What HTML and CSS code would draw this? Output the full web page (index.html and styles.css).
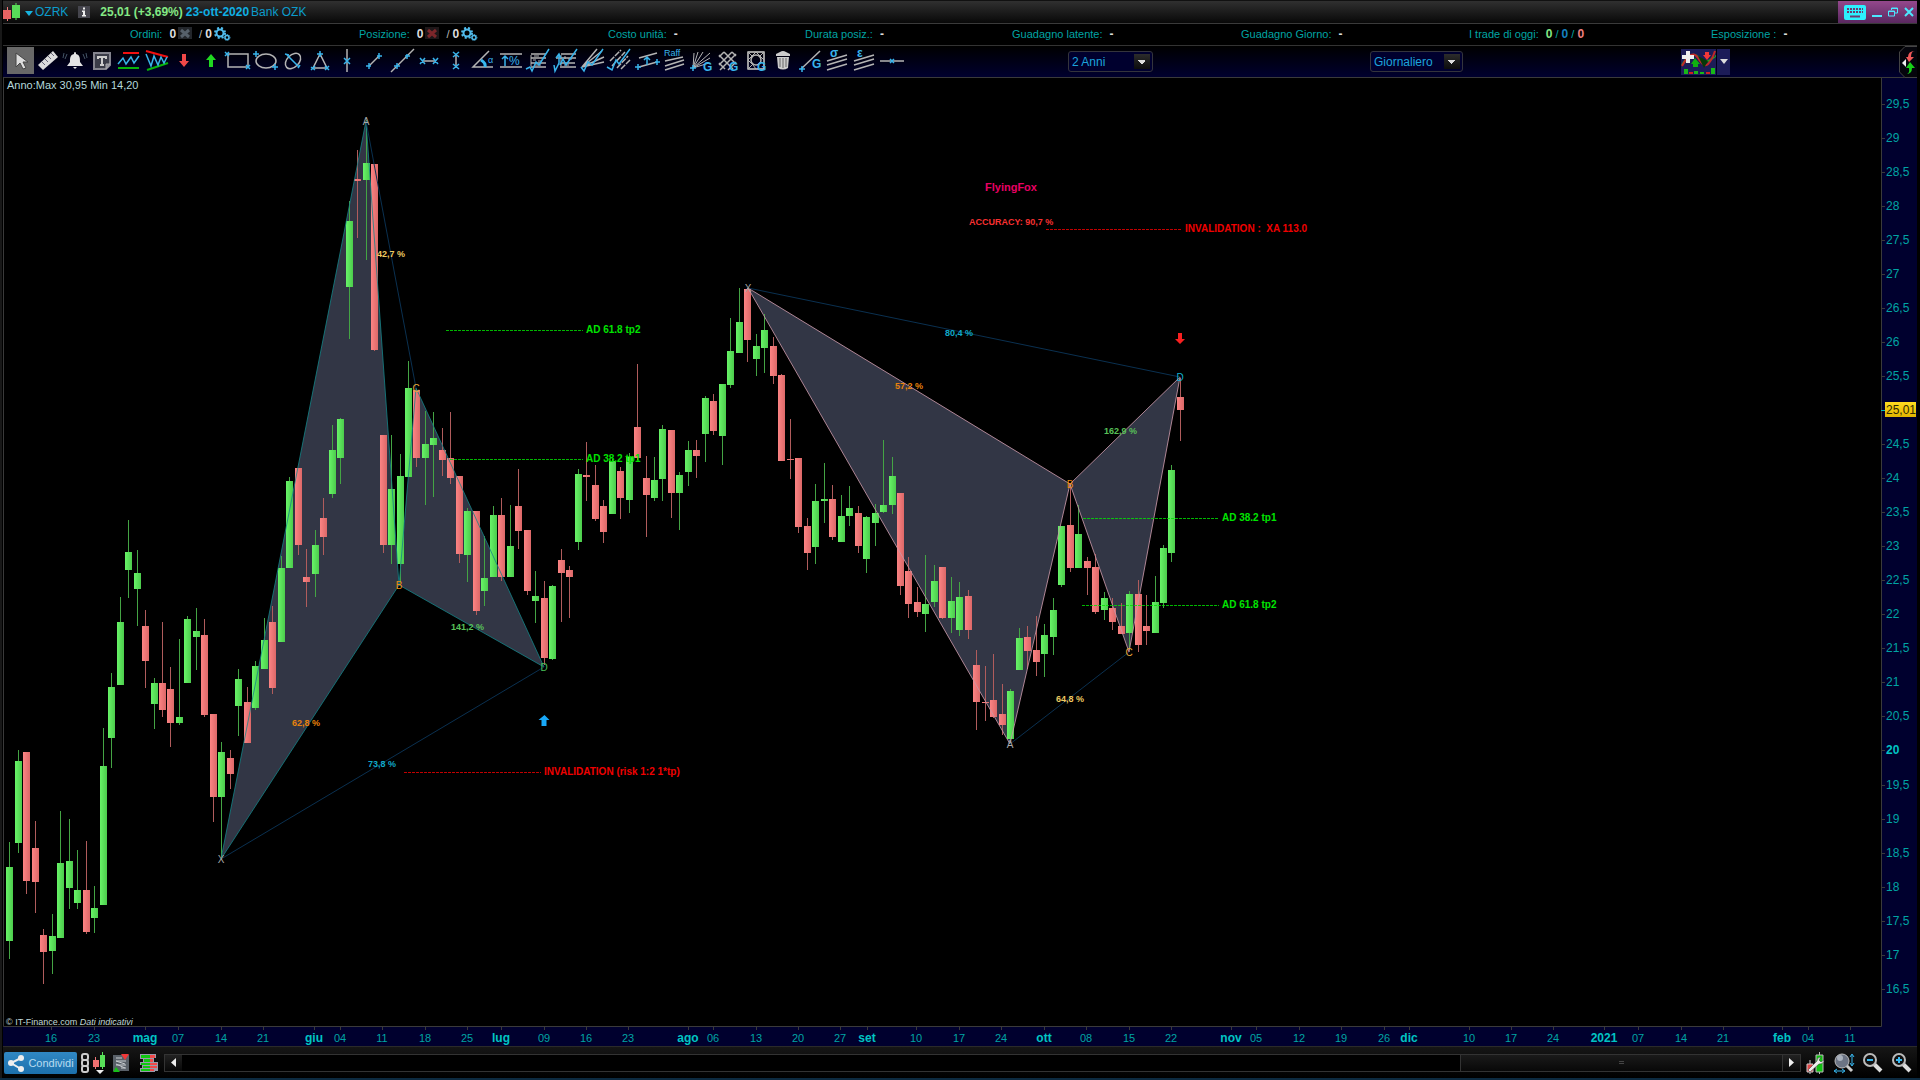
FILE: index.html
```
<!DOCTYPE html>
<html lang="it">
<head>
    <meta charset="UTF-8">
    <meta name="viewport" content="width=device-width" />
    <title>OZRK - Bank OZK</title>
<link rel="stylesheet" href="styles.css">
</head>

<body>
<header class="title">
  <svg class="logo" width="18" height="18" viewBox="0 0 18 18">
    <path d="M4.500 4v14" stroke="#f07878"/><rect x="0" y="7" width="8" height="9" fill="#e86464"/>
    <path d="M13 0v17" stroke="#5ce65c"/><rect x="9" y="2" width="8" height="13" fill="#58dc58"/>
  </svg>
  <svg class="caret" width="8" height="5" viewBox="0 0 8 5"><path d="M0 0h8L4 5z" fill="#18b4e0"/></svg>
  <span class="ticker">OZRK</span>
  <svg class="about" width="12" height="12" viewBox="0 0 12 12"><rect width="12" height="12" fill="#45454d"/><path d="M5 1.500h2v2H5zM4 4.500h3v4.500h1v1.500H4V9h1V6H4z" fill="#eee"/></svg>
  <b class="price">25,01 (+3,69%)</b>
  <b class="date">23-ott-2020</b>
  <span class="name">Bank OZK</span>
  <div class="winbar">
    <button aria-label="Tastiera"><svg width="22" height="16" viewBox="0 0 22 16"><rect y="1" width="22" height="15" rx="2" fill="#2cf0ff"/><path d="M3 5h16M3 8h16" stroke="#6a3a70" stroke-width="2" stroke-dasharray="2 1"/><path d="M6 12.500h10" stroke="#6a3a70" stroke-width="2"/></svg></button>
    <button aria-label="Riduci"><svg width="10" height="16" viewBox="0 0 10 16"><path d="M0 12h10" stroke="#4ce8ff" stroke-width="2"/></svg></button>
    <button aria-label="Ripristina"><svg width="10" height="16" viewBox="0 0 10 16"><path d="M3.500 6V4h6v5H7M.5 7h6v5h-6zM3 4.500h7M0 7.500h7" fill="none" stroke="#4ce8ff"/></svg></button>
    <button aria-label="Chiudi"><svg width="10" height="16" viewBox="0 0 10 16"><path d="M1 4l8 8M9 4l-8 8" stroke="#4ce8ff" stroke-width="2"/></svg></button>
  </div>
</header>

<div class="info">
  <div>Ordini: <b>0</b>
    <button aria-label="Annulla ordini"><svg width="14" height="13" viewBox="0 0 14 13"><rect width="14" height="12" fill="#23262b"/><path d="M3 3l8 7M11 3l-8 7" stroke="#56606a" stroke-width="3"/></svg></button>
    <i>/</i><b>0</b><button aria-label="Impostazioni ordini"><svg width="16" height="14" viewBox="0 0 16 14"><use href="#gears"/></svg></button></div>
  <div>Posizione: <b>0</b>
    <button aria-label="Chiudi posizione"><svg width="14" height="13" viewBox="0 0 14 13"><rect width="14" height="12" fill="#1e1719"/><path d="M3 3l8 7M11 3l-8 7" stroke="#7c262a" stroke-width="3"/></svg></button>
    <i>/</i><b>0</b><button aria-label="Impostazioni posizione"><svg width="16" height="14" viewBox="0 0 16 14"><use href="#gears"/></svg></button></div>
  <div>Costo unità: <b>-</b></div>
  <div>Durata posiz.: <b>-</b></div>
  <div>Guadagno latente: <b>-</b></div>
  <div>Guadagno Giorno: <b>-</b></div>
  <div>I trade di oggi: <span><b class="up">0</b> / <b class="flat">0</b> / <b class="down">0</b></span></div>
  <div>Esposizione : <b>-</b></div>
</div>

<div class="toolbar">
  <div class="tools">
    <button class="on" aria-label="Puntatore"><svg viewBox="0 0 24 24"><path d="M7 4v14l4-4 3 6 3-1-3-6h5z" fill="#ddd" stroke="#444"/></svg></button>
    <button aria-label="Righello"><svg viewBox="0 0 24 24"><path d="M2 16L17 2l5 6L7 21z" fill="#ddd"/><path d="M6 13l3 3M9 10l3 3M12 7l3 3M15 4l3 3" stroke="#667"/></svg></button>
    <button aria-label="Allarme"><svg viewBox="0 0 24 24"><path d="M12 3c-1 0-1 1-1 2-4 1-4 4-4 8l-3 4h16l-3-4c0-4 0-7-4-8 0-1 0-2-1-2zM10 18h4l-2 2z" fill="#e4e4e4"/><path d="M4 5L2 10M1 4L0 9M20 5l2 5M23 4l1 5" stroke="#456" fill="none"/></svg></button>
    <button aria-label="Testo"><svg viewBox="0 0 24 24"><path d="M4 4h16v12l-4 4H4z" fill="#3a3c48" stroke="#84848e" stroke-width="2"/><path d="M20 15h-4v5z" fill="#889" stroke="#aaa"/><path d="M8 10V8h8v2M12 8v8M10 16h4" fill="none" stroke="#ccc" stroke-width="2"/></svg></button>
    <button aria-label="Supporto resistenza"><svg viewBox="0 0 24 24"><path d="M6 4h16" stroke="#f21010" stroke-width="2"/><path d="M1 19h21" stroke="#08b408" stroke-width="2"/><path d="M1 15l5-6 3 6 5-7 3 6 5-7" fill="none" stroke="#3ab4e8" stroke-width="1.500"/></svg></button>
    <button aria-label="Triangoli"><svg viewBox="0 0 24 24"><path d="M1 2l22 6" stroke="#f21010" stroke-width="2"/><path d="M2 21l21-7" stroke="#08b408" stroke-width="2"/><path d="M1 5l5 12 3-10 4 9 3-8 3 6 3-6" fill="none" stroke="#3ab4e8" stroke-width="1.500"/></svg></button>
    <button aria-label="Freccia giù"><svg viewBox="0 0 24 24"><path d="M10 5h4v7h3l-5 6-5-6h3z" fill="#f04848"/></svg></button>
    <button aria-label="Freccia su"><svg viewBox="0 0 24 24"><path d="M10 18h4v-7h3l-5-6-5 6h3z" fill="#20d820"/></svg></button>
    <button aria-label="Rettangolo"><svg viewBox="0 0 24 24"><path d="M2 5h20v13H2z" class="w"/><path d="M-1 3l4 4m0-4l-4 4M20 16l4 4m0-4l-4 4" class="b"/></svg></button>
    <button aria-label="Ellisse"><svg viewBox="0 0 24 24"><ellipse cx="12" cy="12" rx="10" ry="7" class="w"/><path d="M2 2v6M-1 5h6M21 15v6M18 18h6" class="b"/></svg></button>
    <button aria-label="Ellisse inclinata"><svg viewBox="0 0 24 24"><ellipse cx="12" cy="12" rx="9" ry="6" transform="rotate(-45 12 12)" class="w"/><path d="M6 6l12 12M4 5l4 1M17 19l2-3" class="b"/></svg></button>
    <button aria-label="Triangolo"><svg viewBox="0 0 24 24"><path d="M12 5L5 19h14z" class="w"/><path d="M12 2v6M9 5h6M3 18l4 3m0-4l-4 4M17 17l4 4m0-4l-4 4" class="b"/></svg></button>
    <button aria-label="Linea verticale"><svg viewBox="0 0 24 24"><path d="M12 0v23" class="w"/><path d="M9 9l6 6M15 9l-6 6" class="b"/></svg></button>
    <button aria-label="Segmento"><svg viewBox="0 0 24 24"><path d="M7 17L17 7" class="w"/><path d="M7 14v6M4 17h5M17 4v6M15 7h5" class="b"/></svg></button>
    <button aria-label="Retta"><svg viewBox="0 0 24 24"><path d="M1 23L24 0" class="w"/><path d="M7 14v6M4 17h6M17 5v5M15 7h5" class="b"/></svg></button>
    <button aria-label="Segmento orizzontale"><svg viewBox="0 0 24 24"><path d="M5 12h14" class="w"/><path d="M3 9l5 6m0-6l-5 6M16 9l5 6m0-6l-5 6" class="b"/></svg></button>
    <button aria-label="Segmento verticale"><svg viewBox="0 0 24 24"><path d="M12 5v14" class="w"/><path d="M9 3l6 5m0-5l-6 5M9 15l6 5m0-5l-6 5" class="b"/></svg></button>
    <button aria-label="Angolo"><svg viewBox="0 0 24 24"><path d="M18 2L2 18h20" class="w"/><path d="M10 11q5 3 4 7" stroke="#38b8f0" stroke-width="3" fill="none"/><text x="17" y="14">α</text></svg></button>
    <button aria-label="Variazione"><svg viewBox="0 0 24 24"><path d="M1 5h22M1 18h22" class="w"/><path d="M6 17V8M3 10l3-3 3 3" class="b"/><text x="10" y="16" class="big">%</text></svg></button>
    <button aria-label="Fibonacci ritracciamenti"><svg viewBox="0 0 24 24"><path d="M5 5h15M5 9h15M5 14h15M5 18h15" class="w"/><path d="M5 6v11M8 7h5M12 12h4M7 11h3M9 16h6" class="w thin"/><path d="M0 20l4-2 2 4 4-9 3 3L23 0" class="b"/></svg></button>
    <button aria-label="Fibonacci estensioni"><svg viewBox="0 0 24 24"><path d="M8 5h15M3 9h20M8 14h14M7 18h16" class="w"/><path d="M8 6v11M12 7v3M15 10h4M11 16h5" class="w thin"/><path d="M1 16l1 6 4-8V6M3 9l3-4 2 4M7 16l3-6 3 6L24 0" class="b"/></svg></button>
    <button aria-label="Ventaglio Fibonacci"><svg viewBox="0 0 24 24"><path d="M2 18L17 0M2 18L22 2M2 18L24 8M2 18L24 13" class="w"/><path d="M1 18l3 4 4-9 4 3L23 0" class="b"/></svg></button>
    <button aria-label="Fibonacci temporale"><svg viewBox="0 0 24 24"><path d="M3 12L14 1M5 17L18 3M10 19L21 7M14 20l9-9" class="w" stroke-dasharray="6 1"/><path d="M0 18l5 3 4-10 3 4L23 0" class="b"/></svg></button>
    <button aria-label="Canale"><svg viewBox="0 0 24 24"><path d="M4 9l18-5M4 18l18-5" class="w"/><path d="M12 16V9M9 11l3-3 3 3M3 15v6M0 18h6M22 10v6M20 13h5" class="b"/></svg></button>
    <button aria-label="Raff"><svg viewBox="0 0 24 24"><path d="M3 12l18-4M3 17l19-6M3 21l19-6" class="w"/><text x="2" y="7">Raff</text></svg></button>
    <button aria-label="Ventaglio Gann"><svg viewBox="0 0 24 24"><path d="M4 19L5 4M4 19L9 3M4 19L14 3M4 19L21 4M4 19L21 9M4 19l16-5" class="w thin"/><path d="M4 16v6M1 19h6" class="b"/><text x="14" y="22" class="g">G</text></svg></button>
    <button aria-label="Griglia Gann"><svg viewBox="0 0 24 24"><path d="M3 8l5-5M3 16L16 3M4 21L20 5M12 21l8-8M16 3l4 4M8 3l12 12M3 6l14 14M3 14l6 6" class="w"/><text x="13" y="22" class="g">G</text></svg></button>
    <button aria-label="Quadrato Gann"><svg viewBox="0 0 24 24"><path d="M4 3h16v17H4zM4 3l4 4M20 3l-4 4M4 20l4-4M12 3l-3 3-5 5 5 5 3 4M12 3l3 3 5 5" class="w thin"/><path d="M4 3h16v17H4z" class="w"/><circle cx="12" cy="11" r="5" class="w"/><text x="13" y="22" class="g">G</text></svg></button>
    <button aria-label="Elimina"><svg viewBox="0 0 24 24"><path d="M5 7h14v-2l-4-2q-3-2-6 0L5 5zM6 8h12l-1 11q-5 3-10 0z" fill="#ccc"/><path d="M9 9v9M12 9v10M15 9v9" stroke="#666"/></svg></button>
    <button aria-label="Linea Gann"><svg viewBox="0 0 24 24"><path d="M3 20L22 2" class="w"/><path d="M4 17v6M1 20h6" class="b"/><text x="14" y="19" class="g">G</text></svg></button>
    <button aria-label="Deviazione"><svg viewBox="0 0 24 24"><path d="M2 12l20-6M2 16l20-6M2 21l20-6" class="w"/><text x="5" y="8" class="g">σ</text></svg></button>
    <button aria-label="Errore standard"><svg viewBox="0 0 24 24"><path d="M2 12l20-6M2 16l20-6M2 21l20-6" class="w"/><text x="5" y="8" class="g">ε</text></svg></button>
    <button aria-label="Linea orizzontale"><svg viewBox="0 0 24 24"><path d="M0 12h24" class="w"/><path d="M10 10l4 4M14 10l-4 4" class="b"/></svg></button>
  </div>
  <select class="range" aria-label="Periodo"><option>2 Anni</option></select>
  <select class="frame" aria-label="Intervallo"><option>Giornaliero</option></select>
  <div class="indicators">
    <button aria-label="Indicatori"><svg width="35" height="28" viewBox="0 0 35 28">
      <path d="M1 17Q11 2 17 9T29 12T34 8" fill="none" stroke="#20a020" stroke-width="2"/><path d="M1 18Q11 0 17 10T27 16T34 3" fill="none" stroke="#c02828" stroke-width="2"/>
      <path d="M17 8l6 12 4-7z" fill="#063808"/><path d="M24 4h4v3h2l-4 5-4-5h2z" fill="#f03838"/><path d="M12 19h5v-3h2l-5-6-4 6h2z" fill="#10b010"/>
      <path d="M5 3h4v4h4v4H9v4H5v-4H1V7h4z" fill="#eee"/><path d="M3 21h4v5H3zM13 23h4v3h-4zM19 24h4v2h-4zM30 20h4v6h-4z" fill="#18b818"/><path d="M8 24h4v2H8zM25 24h4v2h-4z" fill="#d02020"/></svg></button>
    <button class="more" aria-label="Altri indicatori"><svg width="8" height="5" viewBox="0 0 8 5"><path d="M0 0h8L4 5z" fill="#ddd"/></svg></button>
  </div>
  <button class="side" aria-label="Pannello ordini"><svg width="18" height="32" viewBox="0 0 18 32"><path d="M18 .5H6L.5 6v20l5.500 5.500h12" fill="#05050c" stroke="#444"/><path d="M3 17l4-4v8z" fill="#eee"/><path d="M16 5q-4 0-4 6h3l-5 5-3-5h2q0-6 7-6z" fill="#f05858"/><path d="M7 28q4 0 3-6H7l4-6 5 6h-3q0 6-6 6z" fill="#18d018"/></svg></button>
</div>

<main class="chart">
  <svg id="plot" viewBox="3 78 1914 968" preserveAspectRatio="xMinYMin meet" role="img" aria-label="Grafico OZRK giornaliero">
    <defs>
      <linearGradient id="bull"><stop offset="0" stop-color="#68f468"/><stop offset="1" stop-color="#4ccc4c"/></linearGradient>
      <linearGradient id="bear"><stop offset="0" stop-color="#fc8484"/><stop offset="1" stop-color="#dc6868"/></linearGradient>
      <linearGradient id="gold" x2="0" y2="1"><stop offset="0" stop-color="#ffdc20"/><stop offset="1" stop-color="#e0b400"/></linearGradient>
      <g id="gears" fill="none" stroke="#50bcec"><circle cx="6" cy="6" r="3.500" stroke-width="2"/><circle cx="6" cy="6" r="5" stroke-width="2" stroke-dasharray="2 2"/><circle cx="13" cy="10.500" r="2" stroke-width="1.500"/><circle cx="13" cy="10.500" r="3" stroke-dasharray="1 1"/></g>
    </defs>
    <rect class="axis" x="1881" y="78" width="36" height="968"/>
    <rect class="axis" x="3" y="1026" width="1914" height="20"/>
    <path class="frameline" d="M3.500 78V1026.500H1881.500V78"/>
    <g id="fills"></g>
    <g id="bars"></g>
    <g id="lines"></g>
    <g id="labels"></g>
    <g id="scales"></g>
    <text class="stats" x="7" y="89">Anno:Max 30,95 Min 14,20</text>
    <text class="source" x="6" y="1025">© IT-Finance.com <tspan font-style="italic">Dati indicativi</tspan></text>
    <path d="M544.500 715l5 5h-3v6h-5v-6h-3z" fill="#18a8f8"/>
    <path d="M1180 344l-5-5h3v-6h4v6h3z" fill="#f82020"/>
  </svg>
</main>

<footer class="bottom">
  <button class="share"><svg width="18" height="18" viewBox="0 0 18 18"><path d="M14 4L4 9l10 6" fill="none" stroke="#eee" stroke-width="2"/><circle cx="14" cy="4" r="3" fill="#eee"/><circle cx="4" cy="9" r="3" fill="#eee"/><circle cx="14" cy="15" r="3" fill="#eee"/></svg>Condividi</button>
  <button aria-label="Collega grafici"><svg width="26" height="22" viewBox="0 0 26 22"><g fill="none" stroke="#ccc" stroke-width="2"><rect x="1" y="2" width="6" height="6" rx="2"/><rect x="1" y="8" width="6" height="6" rx="2"/><rect x="1" y="14" width="6" height="6" rx="2"/></g><path d="M14.500 5v12" stroke="#f07878"/><path d="M12 8h6v7h-6z" fill="#f07070"/><path d="M21.500 0v17" stroke="#5ce65c"/><path d="M19 3h5v12h-5z" fill="#58e058"/><path d="M15 18h8l-4 4z" fill="#eee"/></svg></button>
  <button class="sheet" aria-label="Lista titoli"><svg width="16" height="18" viewBox="0 0 16 18"><path d="M0 1h16v16H0z" fill="#596068"/><path d="M3 4h6M3 7l9 3M3 10l9 4M8 14h5M3 7h10M3 11h10" stroke="#c8ccd0"/><path d="M8 0h8l-4 6z" fill="#f03838"/><path d="M0 18l3-5 4 5z" fill="#18c018"/></svg></button>
  <button class="book" aria-label="Book"><svg width="18" height="18" viewBox="0 0 18 18"><path d="M0 0h16v4h-2v4h4v9h-3v1H0v-4h2v-3H0V8h3V5H0z" fill="#99a"/><path d="M1 1h9v3H1zM4 5h6v3H4zM1 9h9v2H1zM3 12h7v2H3zM1 15h9v2H1z" fill="#10c810"/><path d="M10 1h5v3h-5zM10 5h3v3h-3zM10 9h7v2h-7zM10 12h7v2h-7zM10 15h4v2h-4z" fill="#f04848"/></svg></button>
  <div class="scroll">
    <button aria-label="Indietro"><svg width="5" height="9" viewBox="0 0 5 9"><path d="M5 0v9L0 4.500z" fill="#eee"/></svg></button>
    <input type="range" min="0" max="100" value="100" aria-label="Scorrimento">
    <button aria-label="Avanti"><svg width="5" height="9" viewBox="0 0 5 9"><path d="M0 0v9l5-4.500z" fill="#eee"/></svg></button>
  </div>
  <div class="zoom">
    <button aria-label="Impostazioni grafico"><svg width="20" height="22" viewBox="0 0 20 22"><path d="M5 8v14" stroke="#ccc"/><path d="M2 12h6v8H2z" fill="#e04848" stroke="#ccc"/><path d="M14.500 0v22" stroke="#bbb"/><path d="M11 3h7v17h-7z" fill="#10c010" stroke="#bbb"/><path d="M3 18L12 9q0-4 4-4l-2 3 2 2 3-2q0 4-5 4l-9 8z" fill="#eee" stroke="#333" stroke-width=".5"/></svg></button>
    <button aria-label="Adatta"><svg width="20" height="20" viewBox="0 0 20 20"><path d="M12 12l6 6" stroke="#ccc" stroke-width="3"/><circle cx="8" cy="8" r="7" fill="#6c7484" stroke="#bbb"/><circle cx="6" cy="5" r="3" fill="#a8b0bc"/><path d="M18 2v10M16 4l2-3 2 3M16 10l2 3 2-3M1 18h9M3 16l-3 2 3 2M8 16l3 2-3 2" fill="none" stroke="#38b8f0"/></svg></button>
    <button aria-label="Riduci zoom"><svg width="20" height="20" viewBox="0 0 20 20"><path d="M11 11l7 7" stroke="#ddd" stroke-width="4"/><circle cx="7" cy="7" r="6" fill="#111" stroke="#bbb" stroke-width="2"/><path d="M4 7h6" stroke="#38b8f0" stroke-width="2"/></svg></button>
    <button aria-label="Aumenta zoom"><svg width="20" height="20" viewBox="0 0 20 20"><path d="M11 11l7 7" stroke="#ddd" stroke-width="4"/><circle cx="7" cy="7" r="6" fill="#111" stroke="#bbb" stroke-width="2"/><path d="M4 7h6M7 4v6" stroke="#38b8f0" stroke-width="2"/></svg></button>
  </div>
</footer>

<script src="chart.js"></script>
</body>
</html>
```

FILE: styles.css
```
* {
  box-sizing: border-box;
}
body {
  margin: 0;
  padding: 0 3px;
  height: 100vh;
  display: flex;
  flex-direction: column;
  background: #000;
  border-bottom: 2px solid #0c2a40;
  box-shadow: inset 2px 0 #181818;
  font: 12px/16px "Liberation Sans", Arial, sans-serif;
  color: #00a4a4;
  overflow: hidden;
}
button {
  display: flex;
  align-items: center;
  justify-content: center;
  border: 0;
  padding: 0;
  background: none;
  font: inherit;
  color: inherit;
}
svg {
  display: block;
  overflow: visible;
}

/* title bar */
.title {
  flex: none;
  display: flex;
  align-items: center;
  height: 24px;
  border-top: 1px solid #111;
  border-bottom: 1px solid #3a3a3a;
  background: linear-gradient(#303030, #080808);
  color: #0c9ccc;
}
.caret {
  margin: 2px 2px 0 4px;
}
.about {
  margin: 0 10px;
}
.price {
  color: #84e884;
}
.date {
  margin: 0 2px 0 3px;
  color: #10b0e4;
}
.winbar {
  display: flex;
  align-items: center;
  gap: 6px;
  height: 22px;
  margin-left: auto;
  padding: 0 3px 0 6px;
  background: linear-gradient(#94488c, #5a2860);
}

/* account figures */
.info {
  flex: none;
  display: grid;
  grid-template-columns: 229fr 249fr 197fr 207fr 229fr 228fr 242fr 206fr;
  align-items: center;
  height: 22px;
  padding: 0 0 2px 127px;
  border-bottom: 1px solid #333;
  font-size: 11px;
}
.info div {
  display: flex;
  align-items: center;
  gap: 7px;
  white-space: nowrap;
}
.info b {
  color: #ddd;
  font-size: 12px;
}
.info i {
  margin-right: -4px;
  font-style: normal;
  color: #bbb;
}
.info b + button {
  margin-left: -5px;
}
.info .up { color: #84e884; }
.info .flat { color: #1480c0; }
.info .down { color: #f08080; }

/* drawing tools */
.toolbar {
  flex: none;
  display: flex;
  align-items: center;
  height: 32px;
  padding-left: 4px;
  border-bottom: 1px solid #3a3a3a;
  background: linear-gradient(#000, #00002e);
}
.tools {
  display: flex;
  width: 898px;
  padding-bottom: 2px;
}
.tools button {
  flex: 1;
  height: 27px;
}
.tools .on {
  background: #686868;
}
.tools svg {
  width: 24px;
  height: 24px;
}
.w, .b {
  fill: none;
  stroke: #b4b4b4;
  stroke-width: 1.5;
}
.b {
  stroke: #38b4ec;
}
.thin {
  stroke-width: 1;
}
.tools text {
  font-size: 9px;
  fill: #38b4ec;
}
.tools .big {
  font-size: 12px;
}
.tools .g {
  font-size: 12px;
  font-weight: bold;
}
select {
  appearance: none;
  height: 21px;
  padding: 0 3px;
  border: 1px solid #34343c;
  border-radius: 3px;
  background:
    linear-gradient(45deg, #0000 50%, #ddd 0) right 10px top 8px / 4px 4px no-repeat,
    linear-gradient(-45deg, #0000 50%, #ddd 0) right 6px top 8px / 4px 4px no-repeat,
    linear-gradient(#2c2c2c, #0c0c0c) right 2px top 2px / 16px 15px no-repeat,
    #00002e;
  color: #1ca4dc;
  font: inherit;
}
.range {
  width: 85px;
  margin-left: 163px;
}
.frame {
  width: 93px;
  margin-left: 217px;
}
.indicators {
  display: flex;
  gap: 1px;
  margin: 0 auto 0 218px;
}
.indicators button {
  height: 26px;
  background: #1c1c58;
}
.indicators .more {
  width: 13px;
}

/* chart */
.chart {
  flex: 1;
  min-height: 0;
}
.chart svg {
  width: 100%;
  height: 100%;
}
.axis {
  fill: #00002e;
}
.frameline, .tick {
  fill: none;
  stroke: #3a3a3a;
}
.area {
  fill: #323645;
}
.link {
  stroke: #0a3050;
}
.first {
  fill: none;
  stroke: #148488;
  stroke-opacity: .8;
}
.second {
  fill: none;
  stroke: #c898a8;
  stroke-opacity: .85;
}
.bull { fill: url(#bull); }
.bear { fill: url(#bear); }
.wickup { fill: #44a444; }
.wickdown { fill: #b05c5c; }
.chart text {
  font-size: 11px;
  fill: #00a4a4;
}
.chart .month {
  font-size: 12px;
  font-weight: bold;
  fill: #00c4c4;
}
.chart .value {
  font-size: 12px;
}
.chart .tag {
  font-size: 12px;
  fill: #302800;
}
.chart .stats {
  fill: #b4d8dc;
}
.chart .source {
  font-size: 9px;
  fill: #c0d8d8;
}
.chart .level {
  font-size: 10px;
  font-weight: bold;
}
.chart .ratio {
  font-size: 9px;
  font-weight: bold;
}
.chart .vertex {
  font-size: 10px;
}
.chart .pattern {
  font-size: 11px;
  font-weight: bold;
}

/* bottom bar */
.bottom {
  flex: none;
  display: flex;
  align-items: center;
  height: 32px;
  padding-left: 1px;
  border-top: 1px solid #2a2a2a;
  background: linear-gradient(#161616, #000);
}
.share {
  gap: 3px;
  width: 73px;
  height: 22px;
  margin-right: 4px;
  border-radius: 2px;
  background: linear-gradient(#3088c4, #1c70ac);
  color: #b8dcf0;
  font-size: 11px;
}
.sheet {
  margin: 0 11px 0 6px;
}
.book {
  margin-right: 6px;
}
.scroll {
  flex: 1;
  display: flex;
  height: 18px;
  border: 1px solid #333;
}
.scroll button {
  width: 17px;
  background: linear-gradient(#222, #080808);
}
.scroll input {
  flex: 1;
  min-width: 0;
  margin: 0;
  appearance: none;
  background: #000;
}
.scroll input::-webkit-slider-thumb {
  appearance: none;
  width: 323px;
  height: 16px;
  border: 1px solid #333;
  border-width: 0 1px;
  background:
    repeating-linear-gradient(#444 0 1px, #0000 1px 2px) center / 5px 4px no-repeat,
    linear-gradient(#1a1a1a, #080808);
}
.zoom {
  display: flex;
  gap: 9px;
  padding: 0 5px 0 4px;
}
```

FILE: chart.js
```
"use strict";
const NS = "http://www.w3.org/2000/svg";
const STEP = 8.483;  //distance between two days
const START = 9.3;   //centre of the first day
// colour, high, body top, body bottom, low
const DAYS = `
g 842 867 941 959,g 750 761 843 853,r 752 752 881 894,r 821 848 882 913,r 929 935 952 984
g 914 936 951 974,g 811 863 938 938,g 819 861 888 909,g 850 890 903 909,r 841 890 932 934
g 886 908 918 933,g 728 766 905 905,g 673 687 738 768,g 597 622 685 685,g 520 552 570 598
g 550 573 589 626,r 610 626 661 688,g 678 683 704 729,r 622 683 710 717,r 667 689 723 747
g 639 717 723 725,g 616 619 683 683,g 608 631 637 670,r 619 635 715 717,r 714 714 797 822
g 742 752 797 858,r 750 758 774 789,g 669 679 706 736,r 687 702 743 743,g 661 666 708 710
g 618 640 669 669,r 606 622 688 694,g 556 568 642 642,g 477 481 568 568,r 468 468 545 555
r 549 577 582 607,g 530 545 574 597,r 498 518 537 555,g 425 450 494 498,g 418 419 458 484
g 201 221 287 339,r 150 179 181 238,g 120 163 180 260,r 164 164 350 351,r 435 435 545 553
g 435 489 545 564,g 454 476 564 583,g 361 388 477 477,r 389 390 458 467,g 411 444 458 505
g 412 438 445 497,r 428 450 460 476,r 412 458 478 484,r 476 476 554 563,g 508 511 555 582
r 511 511 611 615,g 536 578 591 606,g 506 515 577 577,r 498 515 577 581,g 505 546 577 577
r 469 506 531 549,r 530 530 591 595,g 571 596 601 623,r 581 598 658 665,g 585 586 659 660
r 549 560 573 622,r 566 570 577 618,g 469 474 542 550,r 442 475 477 501,r 465 485 519 521
r 500 506 532 543,g 459 461 514 514,r 467 471 498 519,g 453 457 500 513,r 364 427 458 460
r 456 478 495 537,g 457 480 498 501,g 425 429 479 501,r 430 430 493 518,g 472 475 493 530
g 441 450 472 486,r 440 450 456 478,g 396 398 434 462,r 394 401 431 435,g 384 384 436 465
g 318 351 385 388,g 288 322 353 353,r 288 289 340 362,g 334 346 359 376,g 314 330 348 373
r 337 346 376 384,r 374 375 461 461,r 419 459 460 479,r 458 458 527 533,r 518 526 553 570
g 484 501 547 564,g 463 499 501 523,r 485 499 537 540,g 495 516 542 542,g 486 508 516 526
r 506 513 546 553,g 516 517 559 573,g 504 513 523 546,g 440 505 512 513,g 457 476 505 514
r 493 493 586 595,r 557 571 604 618,r 587 602 612 617,g 555 604 614 632,g 565 581 602 607
r 567 567 618 619,g 577 601 618 633,g 582 597 630 636,r 590 596 630 639,r 650 665 702 730
r 666 702 703 721,r 654 700 717 718,r 684 714 725 735,g 689 691 739 743,g 628 638 670 670
r 626 637 651 669,r 616 650 662 676,g 624 635 654 677,g 598 610 637 655,g 526 526 585 587
r 483 525 568 572,g 505 534 568 568,r 557 561 568 595,r 554 567 612 614,g 592 598 610 620
r 598 608 622 630,r 603 626 634 634,g 591 594 633 648,r 580 594 645 652,r 595 626 631 645
g 576 602 633 633,g 545 548 603 608,g 465 470 553 562,r 378 397 410 441`;

const MONTHS = { 145:'mag', 314:'giu', 501:'lug', 688:'ago', 867:'set', 1044:'ott',
  1231:'nov', 1409:'dic', 1604:'2021', 1782:'feb' };
const DATES = { 51:'16', 94:'23', 178:'07', 221:'14', 263:'21', 340:'04', 382:'11', 425:'18',
  467:'25', 544:'09', 586:'16', 628:'23', 713:'06', 756:'13', 798:'20', 840:'27', 916:'10',
  959:'17', 1001:'24', 1086:'08', 1129:'15', 1171:'22', 1256:'05', 1299:'12', 1341:'19',
  1384:'26', 1469:'10', 1511:'17', 1553:'24', 1638:'07', 1681:'14', 1723:'21', 1808:'04', 1850:'11' };

const PATTERNS = [
  { cls:'first', X:[221,859], A:[366,121], B:[399,585], C:[416,388], D:[544,667] },
  { cls:'second', X:[748,288], A:[1010,744], B:[1070,484], C:[1129,652], D:[1180,377] }
];
const VERTEX = { X:'#a8a8a8', A:'#a8a8a8', B:'#f08c10', C:'#e8a838', D:'#48c058' };
const RATIOS = [
  [377, 257, '42,7 %', '#ecc860'], [292, 726, '62,8 %', '#e8820c'],
  [368, 767, '73,8 %', '#10a8c8'], [451, 630, '141,2 %', '#58c058'],
  [895, 389, '57,2 %', '#e8820c'], [945, 336, '80,4 %', '#10a8c8'],
  [1056, 702, '64,8 %', '#ecc860'], [1104, 434, '162,9 %', '#58c058'],
  [969, 225, 'ACCURACY: 90,7 %', '#f83030']
];
// line start, line end, line y, text
const LEVELS = [
  [446, 583, 330, 'AD 61.8 tp2', '#00e400'], [450, 583, 459, 'AD 38.2 tp1', '#00e400'],
  [404, 541, 772, 'INVALIDATION (risk 1:2 1*tp)', '#f00000'],
  [1046, 1182, 229, 'INVALIDATION :\u00a0 XA 113.0', '#f00000'],
  [1083, 1219, 518, 'AD 38.2 tp1', '#00e400'], [1082, 1219, 605, 'AD 61.8 tp2', '#00e400']
];

function add(parent, tag, attrs, text) {
    let e = document.createElementNS(NS, tag)
    for (let k in attrs) e.setAttribute(k, attrs[k])
    if (text) e.textContent = text
    document.getElementById(parent).append(e)
    return e
}
function drawBars() {
    DAYS.trim().split(/[,\n]/).forEach((s, i) => {
      let [c, h, t, b, l] = s.split(' ')
      let x = Math.round(START + i*STEP)
      let up = c == 'g'
      add('bars', 'rect', { x, y:h, width:1, height:l-h, class: up? 'wickup' : 'wickdown' })
      add('bars', 'rect', { x:x-3, y:t, width:7, height:b-t, class: up? 'bull' : 'bear' })
    })
}
function drawPattern(p) {
    let pts = s => [...s].map(c => p[c]).join(' ')
    add('fills', 'polygon', { points:pts('XAB'), class:'area' })
    add('fills', 'polygon', { points:pts('BCD'), class:'area' })
    add('lines', 'polygon', { points:pts('XAB'), class:p.cls })
    add('lines', 'polygon', { points:pts('BCD'), class:p.cls })
    for (let s of ['XD', 'AC'])
      add('lines', 'polyline', { points:pts(s), class:'link' })
    for (let c in VERTEX) {
      let fill = c == 'D' && p.cls == 'second'? '#10b0d0' : VERTEX[c]
      add('labels', 'text', { x:p[c][0], y:p[c][1]+4, class:'vertex',
        'text-anchor':'middle', style:'fill:'+fill }, c)
    }
}
function drawLabels() {
    for (let [x, y, t, c] of RATIOS)
      add('labels', 'text', { x, y, class:'ratio', style:'fill:'+c }, t)
    for (let [a, b, y, t, c] of LEVELS) {
      add('labels', 'path', { d:`M${a} ${y+.5}H${b}`, stroke:c, 'stroke-opacity':.8, 'stroke-dasharray':'3 1' })
      add('labels', 'text', { x:b+3, y:y+3, class:'level', style:'fill:'+c }, t)
    }
    add('labels', 'text', { x:985, y:191, class:'pattern', style:'fill:#e80064' }, 'FlyingFox')
}
function drawScales() {
    for (let [set, cls] of [[MONTHS, 'month'], [DATES, 'day']])
      for (let x in set) {
        add('scales', 'path', { d:`M${x}.5 1027v3`, class:'tick' })
        add('scales', 'text', { x, y:1042, class:cls, 'text-anchor':'middle' }, set[x])
      }
    for (let p = 29.5; p > 16; p -= 0.5) {
      if (p == 25) continue  //hidden by last price
      let y = Math.round(104 + (29.5-p)*68.05)
      add('scales', 'path', { d:`M1882 ${y}.5h3`, class:'tick' })
      add('scales', 'text', { x:1886, y:y+4, class: p == 20? 'month' : 'value' }, String(p).replace('.', ','))
    }
    add('scales', 'path', { d:'M1881 410.5h4', stroke:'#00bcbc' })
    add('scales', 'rect', { x:1885, y:402, width:31, height:15, fill:'url(#gold)' })
    add('scales', 'text', { x:1886, y:414, class:'tag' }, '25,01')
}
drawBars()
PATTERNS.forEach(drawPattern)
drawLabels()
drawScales()
```
